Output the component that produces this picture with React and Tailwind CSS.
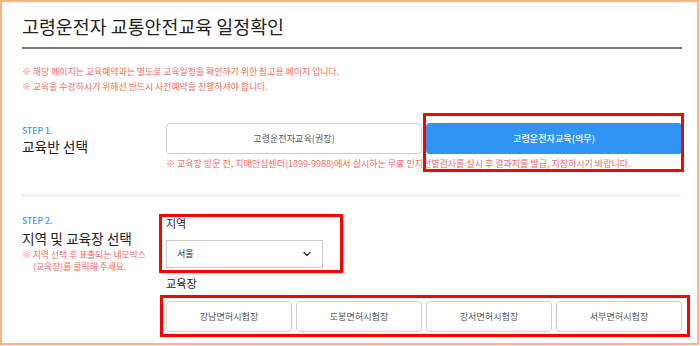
import React from "react";
import { ChevronDown } from "lucide-react";

export default function App() {
  const centers = ["강남면허시험장", "도봉면허시험장", "강서면허시험장", "서부면허시험장"];
  return (
    <div className="w-[700px] h-[346px] bg-white font-['Noto_Sans_CJK_KR',sans-serif]">
      <div className="w-[699px] h-[345px] border-2 border-[#ffb482] pl-[20px] pr-[15px] overflow-hidden text-[#222]">
        {/* header */}
        <div className="pt-[10px] pb-[7px] border-b-2 border-[#7a7a7a]">
          <h1 className="text-[18.4px] leading-[28px] font-normal">고령운전자 교통안전교육 일정확인</h1>
        </div>

        {/* notices */}
        <div className="mt-[15px] text-[8.9px] leading-[15px] text-[#f26b5b]">
          <p>※ 해당 페이지는 교육예약과는 별도로 교육일정을 확인하기 위한 참고용 페이지 입니다.</p>
          <p>※ 교육을 수강하시기 위해선 반드시 사전예약을 진행하셔야 합니다.</p>
        </div>

        {/* step 1 */}
        <div className="mt-[29px] flex pb-[24px] border-b border-dotted border-[#d8d8d8]">
          <div className="w-[144px] pt-[1px]">
            <p className="text-[8.6px] leading-[12px] text-[#3b95ee] font-medium">STEP 1.</p>
            <p className="text-[13.7px] leading-[20px]">교육반 선택</p>
          </div>
          <div className="flex-1">
            <div className="grid grid-cols-2 gap-[4px] h-[31px]">
              <div className="flex items-center justify-center border border-[#cfcfcf] rounded-[4px] text-[9.1px] text-[#555]">
                고령운전자교육(권장)
              </div>
              <div className="relative">
                <div className="h-full flex items-center justify-center bg-[#2f94f3] rounded-[4px] text-[9.1px] text-white font-medium">
                  고령운전자교육(의무)
                </div>
                <div className="absolute left-[-3px] top-[-10px] right-[-2px] bottom-[-18px] border-[3px] border-[#ff0000]" />
              </div>
            </div>
            <p className="mt-[3px] text-[9px] leading-[14px] text-[#f26b5b] whitespace-nowrap">
              ※ 교육장 방문 전, 치매안심센터(1899-9988)에서 실시하는 무료 인지선별검사를 실시 후 결과지를 발급, 지참하시기 바랍니다.
            </p>
          </div>
        </div>

        {/* step 2 */}
        <div className="flex">
          <div className="w-[144px] pt-[18px]">
            <p className="text-[8.6px] leading-[12px] text-[#3b95ee] font-medium">STEP 2.</p>
            <p className="mt-[2px] text-[13.7px] leading-[20px]">지역 및 교육장 선택</p>
            <div className="mt-[1px] text-[8.8px] leading-[12px] text-[#f26b5b]">
              <p>※ 지역 선택 후 표출되는 네모박스</p>
              <p className="pl-[11px]">(교육장)를 클릭해 주세요.</p>
            </div>
          </div>
          <div className="flex-1 pt-[19px]">
            <div className="relative w-[157px]">
              <p className="text-[11px] leading-[16px]">지역</p>
              <div className="mt-[9px] h-[28px] border border-[#cccccc] flex items-center justify-between pl-[10px] pr-[9px]">
                <span className="text-[9.1px] text-[#333]">서울</span>
                <ChevronDown size={12} strokeWidth={2.5} color="#333" />
              </div>
              <div className="absolute left-[-7px] top-[-1px] right-[-20px] bottom-[-5px] border-[3px] border-[#ff0000]" />
            </div>
            <p className="mt-[7px] text-[11.2px] leading-[16px]">교육장</p>
            <div className="relative mt-[10px]">
              <div className="grid grid-cols-4 gap-[4px] h-[31px]">
                {centers.map((c) => (
                  <div
                    key={c}
                    className="flex items-center justify-center border border-[#cfcfcf] rounded-[4px] text-[9.1px] text-[#555]"
                  >
                    {c}
                  </div>
                ))}
              </div>
              <div className="absolute left-[-6px] top-[-6px] right-[-8px] bottom-[-5px] border-[3px] border-[#ff0000]" />
            </div>
          </div>
        </div>
      </div>
    </div>
  );
}
